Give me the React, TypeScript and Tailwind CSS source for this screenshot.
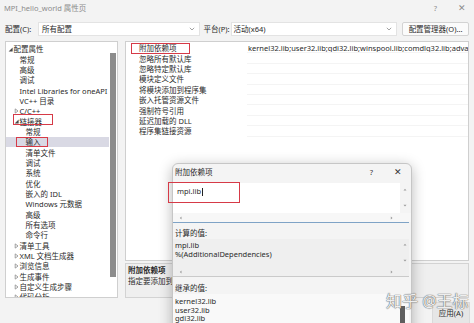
import React from 'react';

type Node = { t: string; l: number; e?: 'open' | 'closed'; sel?: boolean };

const tree: Node[] = [
  { t: '配置属性', l: 0, e: 'open' },
  { t: '常规', l: 1 },
  { t: '高级', l: 1 },
  { t: '调试', l: 1 },
  { t: 'Intel Libraries for oneAPI', l: 1 },
  { t: 'VC++ 目录', l: 1 },
  { t: 'C/C++', l: 1, e: 'closed' },
  { t: '链接器', l: 1, e: 'open' },
  { t: '常规', l: 2 },
  { t: '输入', l: 2, sel: true },
  { t: '清单文件', l: 2 },
  { t: '调试', l: 2 },
  { t: '系统', l: 2 },
  { t: '优化', l: 2 },
  { t: '嵌入的 IDL', l: 2 },
  { t: 'Windows 元数据', l: 2 },
  { t: '高级', l: 2 },
  { t: '所有选项', l: 2 },
  { t: '命令行', l: 2 },
  { t: '清单工具', l: 1, e: 'closed' },
  { t: 'XML 文档生成器', l: 1, e: 'closed' },
  { t: '浏览信息', l: 1, e: 'closed' },
  { t: '生成事件', l: 1, e: 'closed' },
  { t: '自定义生成步骤', l: 1, e: 'closed' },
  { t: '代码分析', l: 1, e: 'closed' },
];

const props = [
  { n: '附加依赖项', v: 'kernel32.lib;user32.lib;gdi32.lib;winspool.lib;comdlg32.lib;advapi32.lib;shell32.lib' },
  { n: '忽略所有默认库', v: '' },
  { n: '忽略特定默认库', v: '' },
  { n: '模块定义文件', v: '' },
  { n: '将模块添加到程序集', v: '' },
  { n: '嵌入托管资源文件', v: '' },
  { n: '强制符号引用', v: '' },
  { n: '延迟加载的 DLL', v: '' },
  { n: '程序集链接资源', v: '' },
];

const spacer = ['w-[2px]', 'w-[8px]', 'w-[14px]'];

function OpenTri() {
  return (
    <svg width="5" height="5" viewBox="0 0 5 5">
      <path d="M4.6 0.6 L4.6 4.6 L0.6 4.6 Z" fill="#4a4a4a" />
    </svg>
  );
}

function ClosedTri() {
  return (
    <svg width="5" height="6" viewBox="0 0 5 6">
      <path d="M1.2 0.9 L4 3 L1.2 5.1 Z" fill="none" stroke="#8a8a8a" strokeWidth="0.8" />
    </svg>
  );
}

function Chevron() {
  return (
    <svg width="6" height="4" viewBox="0 0 6 4">
      <path d="M0.8 0.8 L3 3 L5.2 0.8" fill="none" stroke="#8a8a8a" strokeWidth="0.8" />
    </svg>
  );
}

function Arrow({ dir }: { dir: 'up' | 'down' | 'left' | 'right' }) {
  const d =
    dir === 'up'
      ? 'M0.5 2.5 L2 0.8 L3.5 2.5 Z'
      : dir === 'down'
      ? 'M0.5 0.8 L2 2.5 L3.5 0.8 Z'
      : dir === 'left'
      ? 'M2.5 0.5 L0.8 2 L2.5 3.5 Z'
      : 'M0.8 0.5 L2.5 2 L0.8 3.5 Z';
  return (
    <svg width="4" height="4" viewBox="0 0 4 4">
      <path d={d} fill="#9a9a9a" />
    </svg>
  );
}

export default function App() {
  return (
    <div className="relative w-[474px] h-[323px] overflow-hidden bg-[#f3f3f3] text-[7.5px] text-[#2a2a2a] font-['Noto_Sans','Noto_Sans_CJK_SC',sans-serif]">
      {/* title bar */}
      <div className="h-[15px] flex items-center justify-between pl-[4px] pr-[8px] text-[#8c8c8c]">
        <span className="leading-[10px]">MPI_hello_world 属性页</span>
        <div className="flex items-center gap-[21px]">
          <span className="text-[7.5px] leading-[10px]">?</span>
          <span className="text-[9px] leading-[10px]">✕</span>
        </div>
      </div>

      {/* config row */}
      <div className="mt-[7px] h-[14px] flex items-center px-[5px]">
        <span className="w-[33px] leading-[10px]">配置(C):</span>
        <div className="w-[162px] h-[14px] bg-white border border-[#e3e3e3] flex items-center justify-between pl-[3px] pr-[4px]">
          <span className="leading-[10px]">所有配置</span>
          <Chevron />
        </div>
        <span className="ml-[4px] w-[27px] leading-[10px] whitespace-nowrap">平台(P):</span>
        <div className="w-[167px] h-[14px] bg-white border border-[#e3e3e3] flex items-center justify-between pl-[2px] pr-[4px]">
          <span className="leading-[10px]">活动(x64)</span>
          <Chevron />
        </div>
        <div className="ml-[5px] w-[67px] h-[14px] bg-[#fbfbfb] border border-[#d3d3d3] rounded-[2px] flex items-center justify-center">
          <span className="leading-[10px] whitespace-nowrap">配置管理器(O)...</span>
        </div>
      </div>

      {/* main area */}
      <div className="mt-[5px] flex px-[5px]">
        {/* tree */}
        <div className="w-[114px] h-[257px] bg-white border border-[#cfcfcf] flex overflow-hidden">
          <div className="flex-1 pt-[2px] overflow-hidden">
            {tree.map((n, i) => (
              <div
                key={i}
                className={`h-[10.35px] flex items-center whitespace-nowrap ${n.sel ? 'bg-[#d9d9e4]' : ''}`}
              >
                <div className={spacer[n.l]} />
                <div className="w-[5px] flex items-center justify-center">
                  {n.e === 'open' ? <OpenTri /> : n.e === 'closed' ? <ClosedTri /> : null}
                </div>
                <span className="leading-[10px] pl-[0.5px]">{n.t}</span>
              </div>
            ))}
          </div>
          <div className="w-[8px] pt-[11px] flex justify-center">
            <div className="w-[6px] h-[224px] bg-[#8c8c8c]" />
          </div>
        </div>

        {/* right column */}
        <div className="ml-[7px] w-[344px] flex flex-col">
          <div className="h-[220px] bg-white border border-[#cfcfcf] pt-[1px] overflow-hidden">
            {props.map((p, i) => (
              <div key={i} className="h-[10.4px] flex">
                <div className="w-[121px] pl-[13px] flex items-center whitespace-nowrap">
                  <span className="leading-[10px]">{p.n}</span>
                </div>
                <div className="flex-1 pl-[1px] flex items-center whitespace-nowrap overflow-hidden border-b border-[#f4f4f4]">
                  <span className="leading-[10px]">{p.v}</span>
                </div>
              </div>
            ))}
          </div>
          <div className="mt-[2px] h-[35px] bg-[#efefef] border border-[#d3d3d3] pl-[2px] pt-[1px]">
            <div className="leading-[11px] font-bold">附加依赖项</div>
            <div className="leading-[11px] whitespace-nowrap">指定要添加到链接命令行的附加项。[例如 kernel32.lib]</div>
          </div>
        </div>
      </div>

      {/* bottom buttons */}
      <div className="mt-[4px] flex justify-end pr-[4px]">
        <div className="w-[38px] h-[22px] bg-[#e6e6e6] border border-[#dadada] flex items-center justify-center">
          <span className="leading-[10px]">应用(A)</span>
        </div>
      </div>

      {/* dialog */}
      <div className="absolute left-[172px] top-[163px] w-[240px] h-[175px] bg-[#f4f4f4] border border-[#c6c6c6] rounded-t-[6px] shadow-[0_3px_14px_rgba(0,0,0,0.28)] flex flex-col">
        <div className="h-[16px] flex items-center justify-between pl-[2px] pr-[9px]">
          <span className="leading-[10px]">附加依赖项</span>
          <div className="flex items-center gap-[21px] text-[#333]">
            <span className="leading-[10px]">?</span>
            <span className="text-[9px] leading-[10px]">✕</span>
          </div>
        </div>
        <div className="mt-[3px] flex pr-[2px]">
          <div className="flex-1 h-[30px] bg-white pl-[4px] pt-[3px]">
            <span className="leading-[10px]">mpi.lib</span>
            <span className="inline-block w-[0.7px] h-[8px] bg-[#222] align-middle ml-[0.5px]" />
          </div>
          <div className="w-[9px] flex flex-col items-center justify-between py-[5px]">
            <Arrow dir="up" />
            <Arrow dir="down" />
          </div>
        </div>
        <div className="h-[9px] flex items-center justify-between pl-[6px] pr-[17px] bg-[#f7f7f7]">
          <Arrow dir="left" />
          <Arrow dir="right" />
        </div>
        <div className="h-[1px] mr-[2px] bg-[#7fa3c6]" />
        <div className="mt-[4px] h-[12px] pl-[2px] flex items-center">
          <span className="leading-[10px]">计算的值:</span>
        </div>
        <div className="bg-[#efefef] mr-[2px]">
          <div className="h-[28px] flex">
            <div className="flex-1 pl-[2px] pt-[1.5px] leading-[9px]">
              <div>mpi.lib</div>
              <div>%(AdditionalDependencies)</div>
            </div>
            <div className="w-[9px] flex flex-col items-center justify-between pt-[4px] pb-[4px]">
              <Arrow dir="up" />
              <Arrow dir="down" />
            </div>
          </div>
          <div className="h-[9px] flex items-center justify-between pl-[6px] pr-[15px]">
            <Arrow dir="left" />
            <Arrow dir="right" />
          </div>
        </div>
        <div className="h-[1px] mr-[2px] bg-[#cacaca]" />
        <div className="mt-[5px] h-[12px] pl-[2px] flex items-center">
          <span className="leading-[10px]">继承的值:</span>
        </div>
        <div className="flex-1 flex mr-[2px] bg-[#f9f9f9]">
          <div className="flex-1 pl-[2px] pt-[3px] leading-[8.5px]">
            <div>kernel32.lib</div>
            <div>user32.lib</div>
            <div>gdi32.lib</div>
            <div>winspool.lib</div>
          </div>
          <div className="w-[9px] pt-[12px]">
            <div className="w-[5px] h-[30px] bg-[#5e5e5e]" />
          </div>
        </div>
      </div>

      {/* annotation boxes */}
      <div className="absolute left-[13px] top-[114px] w-[40px] h-[11px] border-[1.5px] border-[#d63a47]" />
      <div className="absolute left-[16px] top-[137px] w-[32px] h-[10px] border-[1.5px] border-[#d63a47]" />
      <div className="absolute left-[131px] top-[43px] w-[59px] h-[11px] border-[1.5px] border-[#d63a47]" />
      <div className="absolute left-[168px] top-[182px] w-[72px] h-[21px] border-[1.5px] border-[#d63a47]" />

      {/* watermark */}
      <div className="absolute left-[386px] top-[292px] text-[16px] leading-[18px] text-white/90 whitespace-nowrap [text-shadow:0_0_1px_#555,0_0_1px_#555]">
        知乎 @王标
      </div>
    </div>
  );
}
